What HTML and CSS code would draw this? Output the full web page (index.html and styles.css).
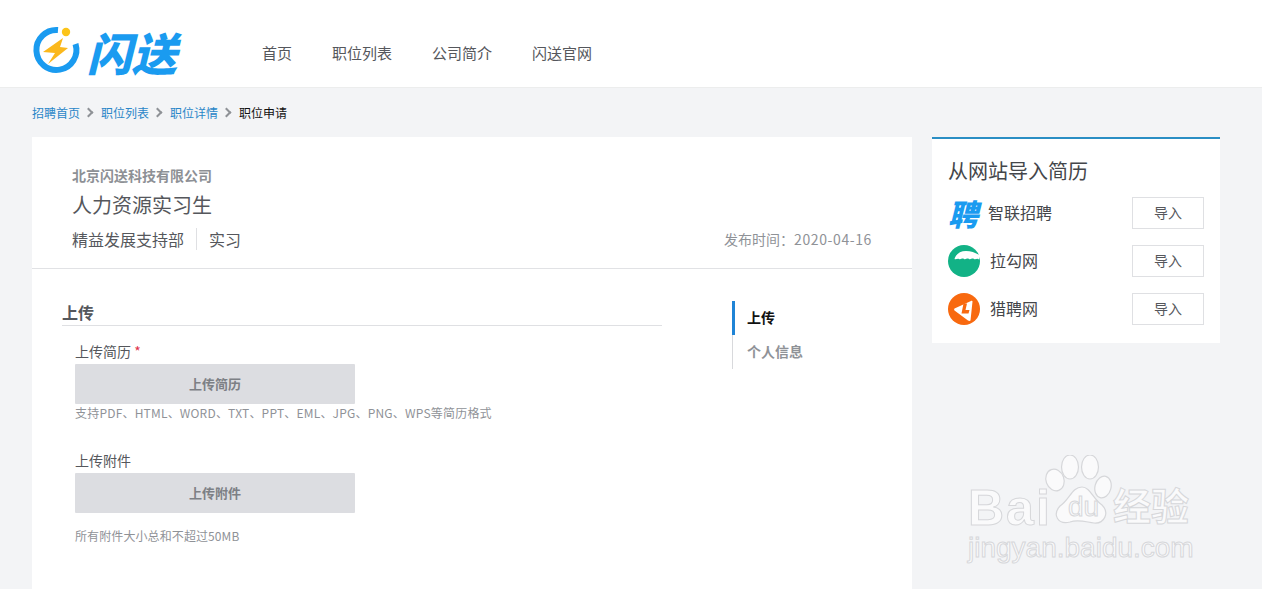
FILE: index.html
```html
<!DOCTYPE html>
<html lang="zh-CN">
<head>
<meta charset="utf-8">
<title>职位申请</title>
<link rel="stylesheet" href="styles.css">
</head>
<body>
<header class="header">
  <a class="logo">
    <svg class="logo-mark" width="50" height="50" viewBox="0 0 50 50">
      <path d="M26 4A20 20 0 1 0 43.500 18" fill="none" stroke="#1a9bf0" stroke-width="6"/>
      <circle cx="34" cy="6" r="4.200" fill="#fcc419"/>
      <path d="M31 12L11 26L23 27L16 38L36 22L28 21Z" fill="#fbb81c"/>
    </svg>
    <span class="logo-text">闪送</span>
  </a>
  <nav class="nav">
    <a>首页</a><a>职位列表</a><a>公司简介</a><a>闪送官网</a>
  </nav>
</header>
<div class="crumbs">
  <a>招聘首页</a><i class="sep"></i><a>职位列表</a><i class="sep"></i><a>职位详情</a><i class="sep"></i><span>职位申请</span>
</div>
<main class="layout">
  <section class="card">
    <div class="job">
      <div class="company">北京闪送科技有限公司</div>
      <h1 class="job-title">人力资源实习生</h1>
      <div class="job-meta">
        <div class="tags"><span class="tag">精益发展支持部</span><span class="tag">实习</span></div>
        <div class="date">发布时间：<span class="date-value">2020-04-16</span></div>
      </div>
    </div>
    <div class="body">
      <div class="form">
        <h2 class="section-title">上传</h2>
        <div class="field">
          <div class="label">上传简历 <em>*</em></div>
          <div class="upload">上传简历</div>
          <p class="hint">支持PDF、HTML、WORD、TXT、PPT、EML、JPG、PNG、WPS等简历格式</p>
        </div>
        <div class="field second">
          <div class="label">上传附件</div>
          <div class="upload">上传附件</div>
          <p class="hint gap">所有附件大小总和不超过50MB</p>
        </div>
      </div>
      <ul class="steps">
        <li class="active">上传</li>
        <li>个人信息</li>
      </ul>
    </div>
  </section>
  <aside class="side">
    <h3 class="side-title">从网站导入简历</h3>
    <div class="row">
      <span class="zl">聘</span><span class="name zl-name">智联招聘</span><button class="import">导入</button>
    </div>
    <div class="row">
      <svg class="site-icon" width="32" height="32" viewBox="0 0 32 32">
        <circle cx="16" cy="16" r="16" fill="#12b286"/>
        <path d="M6.500 14C8 9 12 6 18 6C23 6 27 7.500 32.500 10.500L31 14.500C29 12.500 28 15 26 14C24 12.500 23 15 21 14C19 12.500 18 15 16 14C14 12.500 13 15 11 14C9.500 13 8 15 6.500 14Z" fill="#fff"/>
      </svg>
      <span class="name">拉勾网</span><button class="import">导入</button>
    </div>
    <div class="row">
      <svg class="site-icon" width="32" height="32" viewBox="0 0 32 32">
        <circle cx="16" cy="16" r="16" fill="#f8690f"/>
        <path d="M24.500 8.500L22.500 27.500C22 28 21 28 20 27.500L6.500 17.500C6 17 6 16 6.500 15.500L23 8C24 7.500 24.500 8 24.500 8.500Z" fill="#fff"/>
        <path d="M15.500 10.500H19L17.500 17H21.500L20.500 20.500H13.500Z" fill="#f8690f"/>
      </svg>
      <span class="name">猎聘网</span><button class="import">导入</button>
    </div>
  </aside>
</main>
<div class="watermark">
  <svg class="paw" width="72" height="72" viewBox="0 0 72 72">
    <g fill="#fafafb" stroke="#d6d7da" stroke-width="1.200">
      <ellipse cx="15" cy="25" rx="9" ry="11" transform="rotate(-20 15 25)"/>
      <ellipse cx="30" cy="12" rx="8.500" ry="12"/>
      <ellipse cx="50" cy="12" rx="8.500" ry="12"/>
      <ellipse cx="63" cy="32" rx="8" ry="11" transform="rotate(15 63 32)"/>
      <path d="M42 32C50 32 53 44 62 50C70 58 64 69 54 68C46 67 38 64 30 67C18 70 12 60 20 51C30 44 32 32 42 32Z"/>
    </g>
  </svg>
  <span class="wm-bai">Bai</span><span class="wm-du">du</span><span class="wm-jy">经验</span>
  <span class="wm-url">jingyan.baidu.com</span>
</div>
</body>
</html>
```
FILE: styles.css
```css
* { box-sizing: border-box; }
html, body { margin: 0; height: 589px; overflow: hidden; }
body {
  position: relative;
  background: #f3f4f6;
  font-family: "Noto Sans CJK SC", "Liberation Sans", sans-serif;
  color: #55575c;
}
.header {
  height: 88px;
  background: #fff;
  border-bottom: 1px solid #eceded;
  display: flex;
  align-items: center;
  padding-left: 32px;
}
.logo { display: flex; align-items: flex-start; align-self: flex-start; width: 230px; padding-top: 26px; }
.logo-mark { flex: none; }
.logo-text {
  font-size: 45px;
  font-weight: 900;
  font-style: italic;
  line-height: 1;
  color: #1a9bf0;
  margin: 3px 0 0 5px;
}
.nav { display: flex; gap: 40px; font-size: 15px; color: #55575c; margin-top: 17px; }
.crumbs {
  height: 49px;
  display: flex;
  align-items: center;
  padding-left: 32px;
  font-size: 12px;
  color: #111;
}
.crumbs a { color: #2a86c8; }
.sep {
  width: 7px;
  height: 7px;
  margin: 0 9px 0 5px;
  border-top: 2px solid #8f9297;
  border-right: 2px solid #8f9297;
  transform: rotate(45deg);
}
.layout { display: flex; align-items: flex-start; gap: 20px; padding-left: 32px; }
.card { width: 880px; height: 460px; background: #fff; }
.job { height: 132px; border-bottom: 1px solid #e1e2e5; padding: 28px 40px 0; }
.company { font-size: 14px; line-height: 20px; font-weight: 700; color: #8d9095; }
.job-title { margin: 5px 0 0; font-size: 20px; line-height: 30px; font-weight: 400; color: #55575c; }
.job-meta { display: flex; justify-content: space-between; align-items: center; margin-top: 8px; }
.tags { display: flex; font-size: 16px; line-height: 22px; color: #55575c; }
.tag + .tag { margin-left: 12px; padding-left: 12px; border-left: 1px solid #dfe0e3; }
.date { font-size: 14px; color: #8f9297; }
.date-value { letter-spacing: .6px; }
.body { display: flex; padding: 31px 0 0 30px; }
.form { width: 600px; }
.section-title {
  margin: 0;
  font-size: 16px;
  line-height: 25px;
  font-weight: 700;
  color: #55575c;
  border-bottom: 1px solid #dfe0e3;
}
.field { padding-left: 13px; margin-top: 15px; }
.field.second { margin-top: 28px; }
.label { font-size: 14px; line-height: 20px; color: #55575c; margin-bottom: 3px; }
.label em { color: #e0314b; font-style: normal; }
.upload {
  width: 280px;
  height: 40px;
  padding-bottom: 2px;
  background: #dcdde1;
  border-radius: 1px;
  display: flex;
  align-items: center;
  justify-content: center;
  font-size: 13px;
  font-weight: 700;
  color: #7d8085;
}
.hint { margin: 0; font-size: 12px; line-height: 18px; color: #8f9297; letter-spacing: .2px; }
.hint.gap { padding-top: 14px; letter-spacing: .1px; }
.steps { list-style: none; margin: 1px 0 0 70px; padding: 0; width: 120px; height: 68px; border-left: 1px solid #d8d9dc; font-size: 14px; font-weight: 700; }
.steps li { height: 34px; line-height: 33px; padding-left: 14px; color: #8f9297; }
.steps li.active { color: #111; border-left: 3px solid #1f84d6; margin-left: -1px; padding-left: 12px; }
.side { width: 288px; height: 206px; background: #fff; border-top: 2px solid #2a8ec4; padding: 0 16px; }
.side-title { margin: 19px 0 0; font-size: 20px; line-height: 26px; font-weight: 400; color: #44464a; }
.row { height: 48px; display: flex; align-items: center; }
.side-title + .row { margin-top: 5px; }
.site-icon { flex: none; }
.zl {
  width: 30px;
  font-size: 30px;
  line-height: 32px;
  font-weight: 900;
  font-style: italic;
  color: #1a9bf0;
  white-space: nowrap;
}
.name { margin-left: 10px; padding-bottom: 2px; font-size: 16px; color: #44464a; }
.zl-name { margin-left: 10px; }
.import {
  margin-left: auto;
  width: 72px;
  height: 32px;
  background: #fff;
  border: 1px solid #dfe0e3;
  font: 14px "Noto Sans CJK SC", "Liberation Sans", sans-serif;
  color: #55575c;
  padding: 0 0 2px;
}
.watermark { position: absolute; left: 968px; top: 452px; width: 230px; height: 110px; color: #fafafb; }
.paw { position: absolute; left: 72px; top: 3px; }
.wm-bai, .wm-du, .wm-jy, .wm-url {
  position: absolute;
  font-family: "Liberation Sans", "Noto Sans CJK SC", sans-serif;
  -webkit-text-stroke: 1px #d6d7da;
  line-height: 1;
}
.wm-bai { left: 0; top: 31px; font-size: 50px; font-weight: 700; letter-spacing: 2px; }
.wm-du { left: 100px; top: 41px; font-size: 28px; font-weight: 400; color: #fafafb; }
.wm-jy { left: 145px; top: 33px; font-size: 38px; font-weight: 700; font-family: "Noto Sans CJK SC", sans-serif; }
.wm-url { left: 0; top: 82px; font-size: 28px; }
```
